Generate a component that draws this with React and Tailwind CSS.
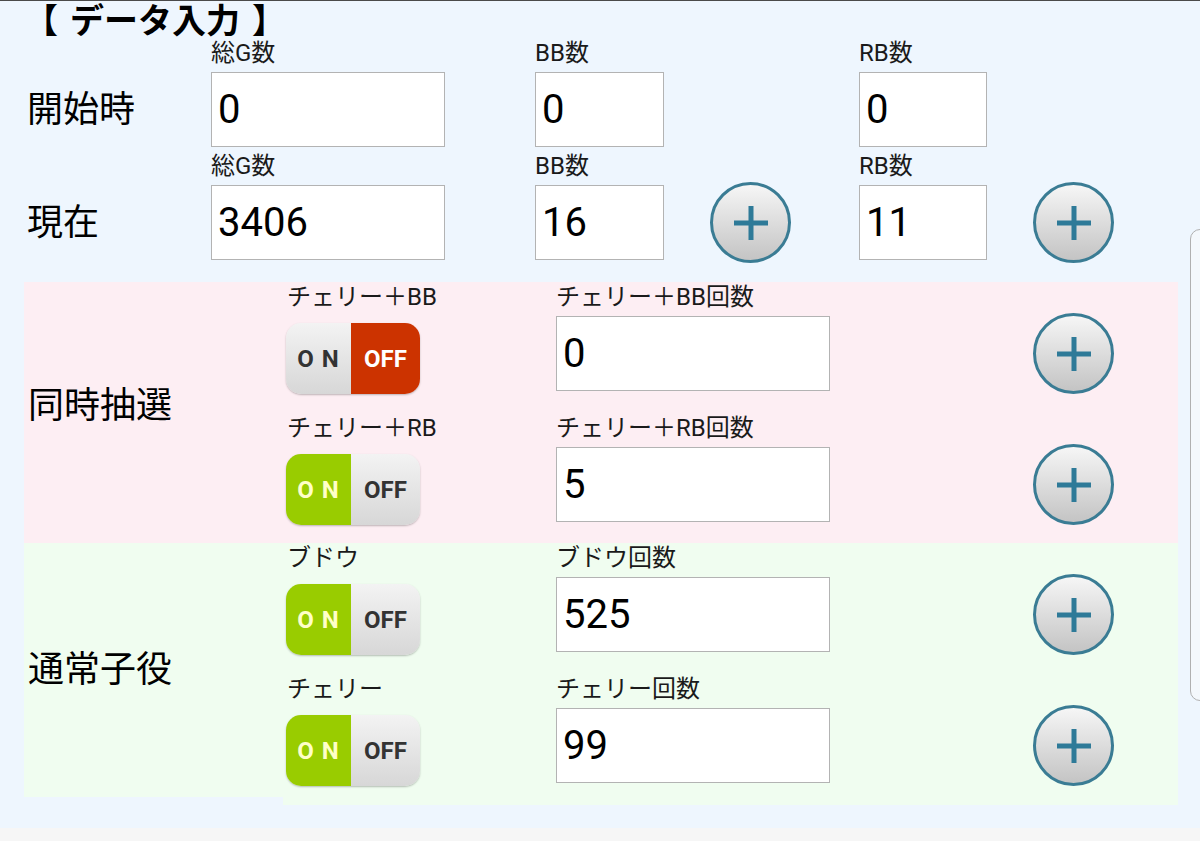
import React from "react";

const FONT = "font-['Roboto','Noto_Sans_CJK_JP',sans-serif]";

function Field({ label, value, w }) {
  return (
    <div className="flex flex-col" style={{ width: w }}>
      <div className="h-[24px] text-[24px] leading-[24px] whitespace-nowrap text-[#1a1a1a]">{label}</div>
      <div className="mt-[7px] h-[75px] border border-[#b3b3b3] bg-white flex items-center pl-[6px] text-[40px] leading-none text-black">
        {value}
      </div>
    </div>
  );
}

function Plus() {
  return (
    <div className="w-[81px] h-[81px] rounded-full border-[3px] border-[#3a7c94] bg-linear-to-b from-[#f6f6f6] to-[#c4c4c4] flex items-center justify-center shrink-0">
      <svg width="34" height="34" viewBox="0 0 34 34">
        <path d="M17 0v34M0 17h34" stroke="#2e7a98" strokeWidth="5" />
      </svg>
    </div>
  );
}

function Toggle({ on }) {
  const grayHalf = "bg-linear-to-b from-[#f3f3f3] to-[#d7d7d7] text-[#333]";
  return (
    <div className="flex w-[134px] h-[71px] rounded-[15px] overflow-hidden shadow-[0_1px_2px_rgba(0,0,0,0.25)] text-[24px] font-bold leading-none">
      <div
        className={
          on
            ? "w-[65px] flex items-center justify-center bg-[#99cc00] text-[#ffffc8] tracking-[1px]"
            : "w-[65px] flex items-center justify-center tracking-[1px] " + grayHalf
        }
      >
        O N
      </div>
      <div
        className={
          on
            ? "flex-1 flex items-center justify-center " + grayHalf
            : "flex-1 flex items-center justify-center bg-[#cc3300] text-white"
        }
      >
        OFF
      </div>
    </div>
  );
}

function SubRow({ label, on, countLabel, value, h }) {
  return (
    <div className="flex pl-[3px] pt-[3px]" style={{ height: h }}>
      <div className="w-[270px] flex flex-col">
        <div className="h-[24px] text-[24px] leading-[24px] whitespace-nowrap pl-[1px] text-[#1a1a1a]">{label}</div>
        <div className="mt-[14px]">
          <Toggle on={on} />
        </div>
      </div>
      <Field label={countLabel} value={value} w={274} />
      <div className="ml-[203px] pt-[28px]">
        <Plus />
      </div>
    </div>
  );
}

export default function App() {
  return (
    <div className={"relative w-[1200px] h-[841px] bg-[#eef6fe] border-t border-[#4a4a4a] overflow-hidden flex flex-col text-black " + FONT}>
      <div className="h-[39px] pl-[24px] text-[34px] font-bold leading-[40px] whitespace-nowrap">
        【<span className="inline-block w-[12px]" />データ入力<span className="inline-block w-[12px]" />】
      </div>

      {/* Row 1 */}
      <div className="flex pt-[1px]">
        <div className="w-[211px] pl-[27px] flex items-end">
          <div className="h-[75px] flex items-center text-[36px]">開始時</div>
        </div>
        <div className="w-[324px]"><Field label="総G数" value="0" w={234} /></div>
        <div className="w-[324px]"><Field label="BB数" value="0" w={129} /></div>
        <div><Field label="RB数" value="0" w={128} /></div>
      </div>

      {/* Row 2 */}
      <div className="flex mt-[7px]">
        <div className="w-[211px] pl-[27px] flex items-end">
          <div className="h-[75px] flex items-center text-[36px]">現在</div>
        </div>
        <div className="w-[324px]"><Field label="総G数" value="3406" w={234} /></div>
        <div className="w-[324px] flex items-end">
          <Field label="BB数" value="16" w={129} />
          <div className="ml-[46px] mb-[-3px]"><Plus /></div>
        </div>
        <div className="flex items-end">
          <Field label="RB数" value="11" w={128} />
          <div className="ml-[46px] mb-[-3px]"><Plus /></div>
        </div>
      </div>

      {/* 同時抽選 */}
      <div className="ml-[24px] w-[1154px] mt-[22px] flex bg-[#fdeef3]">
        <div className="w-[259px] pl-[4px] pb-[14px] flex items-center text-[36px]">同時抽選</div>
        <div className="flex flex-col">
          <SubRow label="チェリー＋BB" on={false} countLabel="チェリー＋BB回数" value="0" h={131} />
          <SubRow label="チェリー＋RB" on={true} countLabel="チェリー＋RB回数" value="5" h={130} />
        </div>
      </div>

      {/* 通常子役 */}
      <div className="ml-[24px] w-[1154px] flex items-start">
        <div className="w-[259px] h-[254px] pl-[4px] flex items-center text-[36px] bg-[#f0fdf0]">通常子役</div>
        <div className="flex-1 h-[262px] flex flex-col bg-[#f0fdf0]">
          <SubRow label="ブドウ" on={true} countLabel="ブドウ回数" value="525" h={131} />
          <SubRow label="チェリー" on={true} countLabel="チェリー回数" value="99" h={131} />
        </div>
      </div>

      <div className="mt-auto h-[13px] bg-[#f6f6f6]" />

      {/* edge handle */}
      <div className="absolute left-[1190px] top-[228px] w-[24px] h-[472px] rounded-[10px] border-[1.5px] border-[#b0b0b0] bg-[#f4f8fc]" />
    </div>
  );
}
